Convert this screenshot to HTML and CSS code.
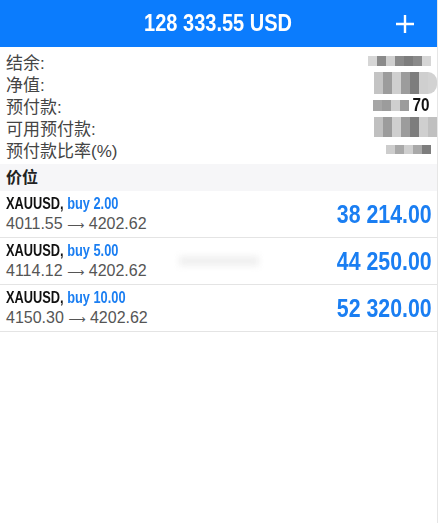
FILE: index.html
```html
<!DOCTYPE html>
<html lang="zh">
<head>
  <meta charset="UTF-8">
  <meta name="viewport" content="width=device-width, initial-scale=1.0">
  <title>交易</title>
  <link rel="stylesheet" href="styles.css">
</head>
<body>
  <div class="header">
    <span></span>
    <h1 class="title">128 333.55 USD</h1>
    <span class="add">
      <svg width="20" height="20" viewBox="0 0 20 20">
        <path d="M10 1v18M1 10h18" stroke="#fff" stroke-width="2.4" fill="none"/>
      </svg>
    </span>
  </div>

  <div class="summary">
    <div class="line"><span>结余:</span><span class="mosaic m1"><i></i><i></i><i></i><i></i><i></i><i></i><i></i></span></div>
    <div class="line"><span>净值:</span><span class="mosaic m2"><i></i><i></i><i></i><i></i><i></i><i></i><i></i></span></div>
    <div class="line"><span>预付款:</span><span class="mosaic m3"><i></i><i></i><i></i><i></i><b>70</b></span></div>
    <div class="line"><span>可用预付款:</span><span class="mosaic m4"><i></i><i></i><i></i><i></i><i></i><i></i><i></i></span></div>
    <div class="line"><span>预付款比率(%)</span><span class="mosaic m5"><i></i><i></i><i></i><i></i><i></i></span></div>
  </div>

  <div class="section">价位</div>

  <div class="trades">
    <div class="trade">
      <div class="info">
        <div class="sym">XAUUSD, <span class="side">buy 2.00</span></div>
        <div class="prices">4011.55 <span class="arrow">⟶</span> 4202.62</div>
      </div>
      <div class="profit">38 214.00</div>
    </div>
    <div class="trade">
      <div class="info">
        <div class="sym">XAUUSD, <span class="side">buy 5.00</span></div>
        <div class="prices">4114.12 <span class="arrow">⟶</span> 4202.62</div>
      </div>
      <div class="ghost"></div>
      <div class="profit">44 250.00</div>
    </div>
    <div class="trade">
      <div class="info">
        <div class="sym">XAUUSD, <span class="side">buy 10.00</span></div>
        <div class="prices">4150.30 <span class="arrow">⟶</span> 4202.62</div>
      </div>
      <div class="profit">52 320.00</div>
    </div>
  </div>
</body>
</html>
```

FILE: styles.css
```css
body {
  margin: 0;
  font-family: "Liberation Sans", "Noto Sans CJK SC", sans-serif;
  background-color: #fff;
  color: #222;
  border-right: 1px solid #e6e6e6;
  min-height: 523px;
  box-sizing: border-box;
}
.header {
  height: 47px;
  background-color: #0b7cfd;
  display: grid;
  grid-template-columns: 1fr auto 1fr;
  align-items: center;
}
.title {
  margin: 0;
  color: #fff;
  font-weight: bold;
  font-size: 23px;
  transform: scaleX(0.87);
}
.add {
  justify-self: end;
  display: flex;
  margin-right: 22px;
}
.summary {
  padding: 3px 6px 4px;
}
.line {
  height: 22px;
  display: flex;
  justify-content: space-between;
  align-items: center;
  font-size: 17px;
  color: #444;
}
.mosaic {
  display: flex;
  align-items: center;
  margin-right: -6px;
}
.mosaic i {
  display: block;
  width: 9px;
  height: 11px;
  background-color: #b8b8b8;
}
.mosaic i:nth-child(2n) { background-color: #9c9c9c; }
.mosaic i:nth-child(3n) { background-color: #cfcfcf; }
.mosaic i:nth-child(5n) { background-color: #7d7d7d; }
.m1 { margin-right: 0; }
.m1 i { background-color: #d6d6d6; height: 10px; }
.m1 i:nth-child(2n) { background-color: #8a8a8a; }
.m2 i { height: 22px; background-color: #c4c4c4; }
.m2 i:last-child { border-radius: 0 11px 11px 0; background-color: #d2d2d2; }
.m3 { margin-right: 0; }
.m3 i { background-color: #a6a6a6; }
.m3 b {
  font-size: 18px;
  color: #111;
  margin-left: 2px;
  display: inline-block;
  transform: scaleX(0.85);
}
.m4 i { height: 20px; background-color: #c0c0c0; }
.m5 { margin-right: 0; }
.m5 i { height: 9px; background-color: #cdcdcd; }
.m5 i:nth-child(2n) { background-color: #a9a9a9; }
.section {
  height: 27px;
  line-height: 27px;
  padding: 0 6px;
  background-color: #f6f6f8;
  font-size: 16px;
  font-weight: bold;
  color: #222;
}
.trade {
  height: 46px;
  border-bottom: 1px solid #e4e4e4;
  display: flex;
  align-items: center;
  padding: 0 5px 0 6px;
}
.info {
  flex: 1;
}
.sym {
  font-weight: bold;
  font-size: 16px;
  color: #111;
  line-height: 20px;
  transform: scaleX(0.8);
  transform-origin: left center;
  white-space: nowrap;
}
.side {
  color: #1a7ef2;
}
.prices {
  font-size: 16px;
  color: #555;
  line-height: 20px;
}
.arrow {
  font-family: "DejaVu Sans", sans-serif;
  font-size: 12px;
}
.ghost {
  width: 80px;
  height: 10px;
  margin-right: 57px;
  background-color: #f0f0f0;
  filter: blur(3px);
}
.profit {
  font-weight: bold;
  font-size: 26px;
  color: #1a7ef2;
  transform: scaleX(0.82);
  transform-origin: right center;
}
```
